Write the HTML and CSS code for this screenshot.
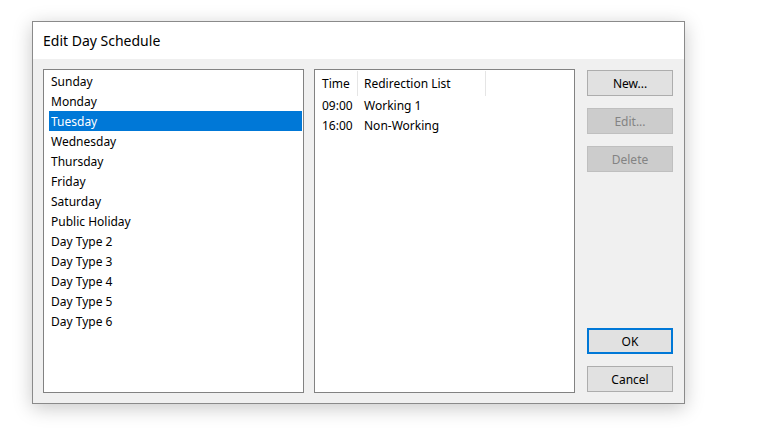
FILE: index.html
```html
<!DOCTYPE html>
<html>
<head>
<meta charset="utf-8">
<link rel="stylesheet" href="styles.css">
</head>
<body>
<div class="dialog">
  <div class="titlebar">Edit Day Schedule</div>
  <div class="content">
    <div class="listbox days">
      <div class="item">Sunday</div>
      <div class="item">Monday</div>
      <div class="item selected">Tuesday</div>
      <div class="item">Wednesday</div>
      <div class="item">Thursday</div>
      <div class="item">Friday</div>
      <div class="item">Saturday</div>
      <div class="item">Public Holiday</div>
      <div class="item">Day Type 2</div>
      <div class="item">Day Type 3</div>
      <div class="item">Day Type 4</div>
      <div class="item">Day Type 5</div>
      <div class="item">Day Type 6</div>
    </div>
    <div class="listbox schedule">
      <div class="header">
        <div class="col col-time">Time</div>
        <div class="col col-list">Redirection List</div>
      </div>
      <div class="row"><div class="cell col-time">09:00</div><div class="cell">Working 1</div></div>
      <div class="row"><div class="cell col-time">16:00</div><div class="cell">Non-Working</div></div>
    </div>
    <div class="buttons">
      <div class="btn">New...</div>
      <div class="btn disabled">Edit...</div>
      <div class="btn disabled">Delete</div>
      <div class="spacer"></div>
      <div class="btn default">OK</div>
      <div class="btn">Cancel</div>
    </div>
  </div>
</div>
</body>
</html>
```

FILE: styles.css
```css
html, body {
  margin: 0;
  padding: 0;
  background: #ffffff;
  font-family: "Noto Sans", "Liberation Sans", sans-serif;
  font-size: 12px;
  color: #000;
}
body {
  padding: 21px 0 0 32px;
  width: 772px;
  height: 432px;
  box-sizing: border-box;
  overflow: hidden;
}
.dialog {
  width: 653px;
  height: 383px;
  box-sizing: border-box;
  border: 1px solid #8a8a8a;
  background: #f0f0f0;
  box-shadow: 0 4px 18px rgba(0, 0, 0, 0.22);
  display: flex;
  flex-direction: column;
}
.titlebar {
  height: 37px;
  background: #fff;
  font-size: 14px;
  line-height: 37px;
  padding-left: 10px;
  flex: none;
}
.content {
  flex: 1;
  display: flex;
  padding: 10px 11px 10px 10px;
  min-height: 0;
}
.listbox {
  background: #fff;
  border: 1px solid #828282;
  box-sizing: border-box;
  width: 261px;
  height: 324px;
}
.days {
  padding: 1px 1px 0 5px;
}
.item {
  height: 20px;
  box-sizing: border-box;
  line-height: 20px;
  padding: 1px 0 0 2px;
  white-space: nowrap;
}
.item.selected {
  background: #0078d7;
  color: #fff;
}
.schedule {
  margin-left: 10px;
}
.header {
  display: flex;
  height: 25px;
  margin-top: 1px;
}
.col {
  line-height: 24px;
  padding-top: 1px;
  border-right: 1px solid #e5e5e5;
  height: 25px;
  box-sizing: border-box;
}
.col-time {
  width: 43px;
  box-sizing: border-box;
  padding-left: 7px;
}
.col-list {
  width: 128px;
  padding-left: 6px;
}
.row {
  display: flex;
  height: 20px;
  line-height: 20px;
}
.cell {
  padding-left: 6px;
}
.row .col-time {
  padding-left: 7px;
}
.buttons {
  margin-left: 12px;
  width: 86px;
  display: flex;
  flex-direction: column;
  gap: 12px;
  padding: 1px 0;
  box-sizing: border-box;
  height: 324px;
}
.spacer {
  flex: 1;
  margin-top: -12px;
}
.btn {
  height: 26px;
  box-sizing: border-box;
  border: 1px solid #adadad;
  background: #e1e1e1;
  text-align: center;
  line-height: 26px;
  flex: none;
}
.btn.disabled {
  background: #cccccc;
  border-color: #bfbfbf;
  color: #838383;
}
.btn.default {
  border: 2px solid #0078d7;
  line-height: 24px;
}
```
